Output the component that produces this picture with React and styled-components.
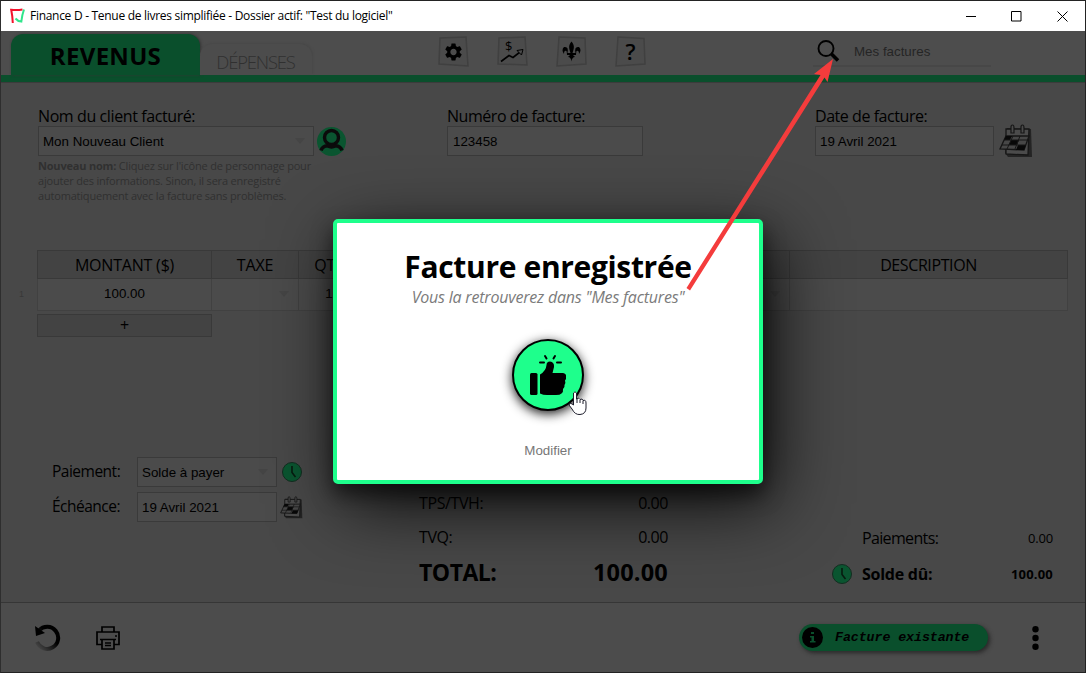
import React from "react";
import styled, { createGlobalStyle } from "styled-components";
import { MdSettings } from "react-icons/md";

const ui = `"Segoe UI", "Open Sans", "Noto Sans", sans-serif`;
const arial = `"Liberation Sans", Arial, sans-serif`;

const GlobalStyle = createGlobalStyle`
  * { box-sizing: border-box; }
  body { margin: 0; background: #484848; overflow: hidden; }
  svg { display: block; flex: none; }
`;

const Window = styled.div`
  position: relative;
  display: flex;
  flex-direction: column;
  width: 1086px;
  height: 673px;
  border: 1px solid #232323;
  border-left-color: #2e2e2e;
  background: #484848;
  color: #000;
  font-family: ${ui};
  overflow: hidden;
`;

const TitleBar = styled.div`
  display: flex;
  align-items: center;
  flex: none;
  height: 30px;
  padding: 0 17px 0 8px;
  background: #fff;
`;

const Label = styled.span`
  display: block;
  white-space: nowrap;
  font-family: ${ui};
  font-size: ${(p) => p.$size || 16}px;
  font-weight: ${(p) => p.$weight || 400};
  letter-spacing: ${(p) => p.$track || 0}px;
  line-height: ${(p) => p.$line || 20}px;
`;

const TitleText = styled(Label)`
  margin-left: 5px;
  flex: 1;
`;

const WindowButtons = styled.div`
  display: flex;
  gap: 35px;
`;

const Header = styled.header`
  display: flex;
  flex: none;
  height: 51px;
  padding-left: 10px;
  background: #4d4d4d;
  border-bottom: 7px solid #0a4f2c;
`;

const Tab = styled.div`
  display: flex;
  justify-content: center;
  align-items: center;
  align-self: flex-end;
  width: ${(p) => (p.$active ? 189 : 112)}px;
  height: ${(p) => (p.$active ? 41 : 31)}px;
  padding-top: ${(p) => (p.$active ? 2 : 5)}px;
  padding-right: ${(p) => (p.$active ? 0 : 1)}px;
  border-radius: 12px 12px 0 0;
  background: ${(p) => (p.$active ? "#0a4f2c" : "#4c4c4c")};
  box-shadow: ${(p) => (p.$active ? "1px 0 3px #333" : "1px -1px 2px #484848")};
  color: ${(p) => (p.$active ? "#000" : "#303030")};
`;

const Tools = styled.nav`
  display: flex;
  gap: 28px;
  margin: 5px 0 0 126px;
`;

const Search = styled.div`
  display: flex;
  align-items: center;
  width: 178px;
  height: 31px;
  margin: 5px 0 0 167px;
  padding: 2px 0 0 4px;
  gap: 14px;
  border-bottom: 2px solid #474747;
  color: #252525;
  font: 13.33px ${arial};
`;

const Main = styled.main`
  display: flex;
  flex-direction: column;
  flex: none;
  height: 520px;
  border-top: 1px solid #3b3b3b;
`;

const Fields = styled.section`
  display: flex;
  height: 167px;
  padding: 23px 0 0 37px;
`;

const Field = styled.div`
  width: ${(p) => p.$width}px;
`;

const Line = styled.div`
  display: flex;
  align-items: center;
  height: 30px;
  gap: ${(p) => p.$gap || 3}px;
`;

const Input = styled.div`
  display: flex;
  align-items: center;
  justify-content: space-between;
  flex: none;
  width: ${(p) => p.$width}px;
  height: 30px;
  padding: 0 ${(p) => p.$end || 8}px 0 ${(p) => p.$start || 4}px;
  border: 1px solid #3a3a3a;
  background: #4b4b4b;
  font: 13.33px ${arial};
  white-space: nowrap;
`;

const Caret = styled.i`
  width: 0;
  height: 0;
  border: 5px solid transparent;
  border-top: 6px solid #454545;
  border-bottom: 0;
`;

const Help = styled.p`
  margin: 2px 0 0;
  color: #303030;
  font-size: 11px;
  line-height: 15px;
  letter-spacing: -0.19px;
  white-space: nowrap;
`;

const Table = styled.section`
  display: grid;
  grid-template-columns: 175px 87px 61px 430px 278px;
  grid-template-rows: 29px 32px;
  width: 1031px;
  margin-left: 36px;
  position: relative;
`;

const Cell = styled.div`
  display: flex;
  align-items: center;
  justify-content: ${(p) => (p.$end ? "flex-end" : "center")};
  padding: 0 ${(p) => (p.$end ? 9 : 0)}px ${(p) => (p.$head ? 0 : 2)}px 0;
  border: solid ${(p) => (p.$head ? "#393939" : "#414141")};
  border-width: ${(p) => (p.$head ? "1px 1px 1px 0" : "0 1px 1px 0")};
  background: ${(p) => (p.$head ? "#434343" : "#4b4b4b")};
  font: 13.33px ${arial};
  &:nth-child(5n + 1) { border-left-width: 1px; }
`;

const RowNumber = styled.span`
  position: absolute;
  left: -18px;
  top: 39px;
  color: #383838;
  font: 9px ${arial};
`;

const AddRow = styled.button`
  width: 175px;
  height: 23px;
  margin: 3px 0 0 36px;
  padding: 0;
  border: 1px solid #393939;
  background: #434343;
  color: #000;
  font: 16px/19px ${ui};
`;

const Summary = styled.section`
  display: flex;
  margin-top: 119px;
  height: 145px;
`;

const Payment = styled.div`
  display: grid;
  grid-template-columns: 85px 140px 24px;
  grid-auto-rows: 30px;
  row-gap: 5px;
  width: 418px;
  padding: 1px 0 0 51px;
  align-items: center;
`;

const PaymentLabel = styled(Label)`
  padding-bottom: 3px;
`;

const PaymentIcon = styled.div`
  padding-left: ${(p) => p.$indent}px;
`;

const Totals = styled.div`
  width: 249px;
  padding-top: 30px;
`;

const Pair = styled.div`
  display: flex;
  align-items: center;
  justify-content: space-between;
  height: ${(p) => p.$height}px;
`;

const Balance = styled.div`
  width: 221px;
  margin-left: 164px;
  padding-top: 65px;
`;

const Grow = styled.div`
  flex: 1;
  padding-left: ${(p) => p.$indent || 0}px;
`;

const Footer = styled.footer`
  display: flex;
  align-items: center;
  flex: 1;
  padding: 0 46px 0 33px;
  border-top: 1px solid #363636;
  background: #4c4c4c;
`;

const FooterIcons = styled.div`
  display: flex;
  align-items: center;
  gap: 35px;
  flex: 1;
`;

const Pill = styled.div`
  display: flex;
  align-items: center;
  gap: 12px;
  width: 189px;
  height: 27px;
  margin-right: 43px;
  padding-left: 3px;
  border-radius: 14px;
  background: #0a4f2c;
  box-shadow: 2px 2px 4px #282828;
  font: italic bold 13.33px "Liberation Mono", "Courier New", monospace;
  letter-spacing: -0.1px;
  white-space: nowrap;
`;

const Modal = styled.div`
  position: absolute;
  left: 332px;
  top: 218px;
  display: flex;
  flex-direction: column;
  align-items: center;
  width: 430px;
  height: 265px;
  padding-top: 24px;
  border: 4px solid #1eff8c;
  border-radius: 5px;
  background: #fff;
  box-shadow: 0 10px 20px rgba(0, 0, 0, 0.55), 10px 20px 70px rgba(0, 0, 0, 0.85);
`;

const Subtitle = styled(Label)`
  color: #7b7b7b;
  font-style: italic;
`;

const ThumbButton = styled.div`
  display: flex;
  align-items: center;
  justify-content: center;
  width: 72px;
  height: 72px;
  margin: 32px 0 32px;
  border: 2px solid #000;
  border-radius: 50%;
  background: #1eff8c;
  box-shadow: 0 3px 11px rgba(0, 0, 0, 0.9);
`;

const Secondary = styled.span`
  color: #777;
  font: 13.33px/15px ${arial};
`;

const Annotation = styled.svg`
  position: absolute;
  left: -1px;
  top: -1px;
  pointer-events: none;
`;

const Logo = () => (
  <svg width="16" height="16" viewBox="0 0 16 16" fill="none" strokeWidth="2">
    <path d="M13.500 1.500 Q8 2.500 2.200 1.800 Q3.500 8 3.800 15" stroke="#f3122c" />
    <path d="M15 1.500 Q13 7 12.300 13.600 Q9 13.500 6.500 10.500" stroke="#2fe58b" />
  </svg>
);

const Frame = ({ points, children }) => (
  <svg width="31" height="31" viewBox="0 0 31 31">
    <polygon points={points} fill="#4b4b4b" stroke="#404040" strokeWidth="1.5" />
    {children}
  </svg>
);

const Calendar = ({ size }) => (
  <svg width={size} height={size} viewBox="0 0 34 34">
    <path d="M8 4 L32 5 L33 33 L9 33 L6 29Z" fill="#242424" />
    <path d="M7 5 L30 5 L29 31 L7 30Z" fill="#4b4b4b" stroke="#161616" strokeWidth="1.3" />
    <path d="M7 12 L30 12 L25 26 L1 25Z" fill="#474747" stroke="#161616" strokeWidth="1.3" />
    <path d="M7 12h6l-2 4H5zM12 16h8l-2 5h-8zM19 21h8l-2 5h-8z" fill="#080808" />
    <path d="M5 16h23M3 21h24M14 12L8 25M21 12l-5 13" stroke="#161616" strokeWidth="1" />
    <path d="M12 9V3q0-2 1.500-2t1.500 3v5zM22 9V3q0-2 1.500-2t1.500 3v5z" fill="#4b4b4b" stroke="#161616" strokeWidth="1.200" />
  </svg>
);

const Clock = () => (
  <svg width="20" height="20" viewBox="0 0 20 20">
    <circle cx="10" cy="10" r="9.500" fill="#0a5530" stroke="#132d20" />
    <path d="M10 4 V10.500 L13.500 15" fill="none" stroke="#071b10" strokeWidth="1.600" />
  </svg>
);

const Person = () => (
  <svg width="29" height="29" viewBox="0 0 29 29">
    <circle cx="14.500" cy="14.500" r="14.500" fill="#0a5530" />
    <circle cx="14.500" cy="10.500" r="7" fill="none" stroke="#0b0b0b" strokeWidth="3.400" />
    <path d="M4 23.500 Q5.500 19 10.500 18.700 Q14.500 21 18.500 18.700 Q23.500 19 25 23.500" fill="none" stroke="#0b0b0b" strokeWidth="3.600" />
  </svg>
);

const Thumb = () => (
  <svg width="40" height="44" viewBox="0 0 40 44">
    <rect x="2" y="20" width="7.500" height="22" rx="1.500" />
    <path d="M12 21.500 Q18 18 18.500 12 Q18.500 8.500 22 8.500 Q26.500 9 26 14 L24.500 20 H35 Q38.500 20.500 38 23.500 Q38.500 26 37 27.500 Q38 30 36.500 32 Q37 34.500 35 36 Q35.500 39 33.500 40.500 Q32 42 28 42 H19 Q15 42 12 40.500Z" />
    <path d="M12 9.500h4M29 9.500h4M17 3l1.500 2.500M27 3l-1.500 2.500" stroke="#000" strokeWidth="2" strokeLinecap="round" />
  </svg>
);

export default function App() {
  return (
    <>
      <GlobalStyle />
      <Window>
        <TitleBar>
          <Logo />
          <TitleText $size={12} $track={-0.29}>Finance D - Tenue de livres simplifiée - Dossier actif: "Test du logiciel"</TitleText>
          <WindowButtons>
            <svg width="11" height="11"><path d="M1 5.500h10" stroke="#000" /></svg>
            <svg width="11" height="11"><path d="M.5.5h9.500v9.500H.5z" fill="none" stroke="#000" /></svg>
            <svg width="11" height="11"><path d="M.5.500l10 10M10.500.500l-10 10" stroke="#000" /></svg>
          </WindowButtons>
        </TitleBar>

        <Header>
          <Tab $active><Label $size={24} $weight={700} $line={30} $track={0.3}>REVENUS</Label></Tab>
          <Tab><Label $size={18.5} $weight={300} $track={-1.2}>DÉPENSES</Label></Tab>
          <Tools>
            <Frame points="2,2 28,1 30,30 1,28"><MdSettings x="5" y="5.500" size="21" /></Frame>
            <Frame points="2,2 28,1 30,29 1,28">
              <text x="8" y="15" fontSize="13" fontFamily="Open Sans, sans-serif">$</text>
              <path d="M4 25.500 L12 19.500 L16 21.500 L23 16" fill="none" stroke="#000" strokeWidth="1.600" />
              <path d="M20 14.500 L26 13.500 L24.500 19Z" fill="#4b4b4b" stroke="#000" />
            </Frame>
            <Frame points="3,1 29,2 30,28 1,30">
              <path d="M15.500 5.500 C12 10 13 12 14.500 17 H11.500 Q13 10 8 11 Q5 14 8 18 Q8 14 10.500 15 Q11 17 11 19 H14 L12 21 Q15 21 15.500 25.500 Q16 21 19 21 L17 19 H20 Q20 17 20.500 15 Q23 14 23 18 Q26 14 23 11 Q18 10 19.500 17 H16.500 C18 12 19 10 15.500 5.500Z" />
            </Frame>
            <Frame points="3,1 29,2.500 30,28 1,30">
              <text x="10.500" y="24" fontSize="22" fontWeight="600" fontFamily="Open Sans, sans-serif">?</text>
            </Frame>
          </Tools>
          <Search>
            <svg width="23" height="23" viewBox="0 0 23 23" fill="none" stroke="#000">
              <circle cx="9" cy="8.500" r="7.500" strokeWidth="1.900" />
              <path d="M14 13.500l7 7" strokeWidth="3.600" />
            </svg>
            Mes factures
          </Search>
        </Header>

        <Main>
          <Fields>
            <Field $width={409}>
              <Label $track={-0.4}>Nom du client facturé:</Label>
              <Line><Input $width={276}>Mon Nouveau Client<Caret /></Input><Person /></Line>
              <Help><b>Nouveau nom:</b> Cliquez sur l'icône de personnage pour<br />ajouter des informations. Sinon, il sera enregistré<br />automatiquement avec la facture sans problèmes.</Help>
            </Field>
            <Field $width={368}>
              <Label $track={-0.45}>Numéro de facture:</Label>
              <Input $width={196} $start={5}>123458</Input>
            </Field>
            <Field $width={220}>
              <Label $track={-0.45}>Date de facture:</Label>
              <Line $gap={5}><Input $width={179}>19 Avril 2021</Input><Calendar size={34} /></Line>
            </Field>
          </Fields>

          <Table>
            <Cell $head><Label $track={-0.2}>MONTANT ($)</Label></Cell>
            <Cell $head><Label $track={-0.2}>TAXE</Label></Cell>
            <Cell $head><Label $track={-0.2}>QTÉ</Label></Cell>
            <Cell $head />
            <Cell $head><Label $track={-0.4}>DESCRIPTION</Label></Cell>
            <Cell>100.00</Cell>
            <Cell $end><Caret /></Cell>
            <Cell>1</Cell>
            <Cell $end><Caret /></Cell>
            <Cell />
            <RowNumber>1</RowNumber>
          </Table>
          <AddRow>+</AddRow>

          <Summary>
            <Payment>
              <PaymentLabel $size={15.5} $track={-0.5}>Paiement:</PaymentLabel>
              <Input $width={140}>Solde à payer<Caret /></Input>
              <PaymentIcon $indent={5}><Clock /></PaymentIcon>
              <PaymentLabel $size={15.5} $track={-0.5}>Échéance:</PaymentLabel>
              <Input $width={140}>19 Avril 2021</Input>
              <PaymentIcon $indent={3}><Calendar size={23} /></PaymentIcon>
            </Payment>
            <Totals>
              <Pair $height={34}><Label $track={-0.4}>TPS/TVH:</Label><Label $track={-0.45}>0.00</Label></Pair>
              <Pair $height={34}><Label $track={-0.4}>TVQ:</Label><Label $track={-0.45}>0.00</Label></Pair>
              <Pair $height={36}><Label $size={23} $weight={700} $track={-0.5}>TOTAL:</Label><Label $size={23.5} $weight={700} $track={0.2}>100.00</Label></Pair>
            </Totals>
            <Balance>
              <Pair $height={34}><Grow $indent={30}><Label $track={-0.65}>Paiements:</Label></Grow><Label $size={13} $track={-0.2}>0.00</Label></Pair>
              <Pair $height={38}><Clock /><Grow $indent={10}><Label $weight={700} $track={-0.25}>Solde dû:</Label></Grow><Label $size={13} $weight={700} $track={0.2}>100.00</Label></Pair>
            </Balance>
          </Summary>
        </Main>

        <Footer>
          <FooterIcons>
            <svg width="27" height="27" viewBox="0 0 27 27" fill="none">
              <defs><linearGradient id="fade" x1="0" y1="1" x2=".6" y2=".4"><stop offset="0" stopColor="#4c4c4c" /><stop offset="1" stopColor="#000" /></linearGradient></defs>
              <path d="M5 6.500 A11 11 0 1 1 3 18" stroke="url(#fade)" strokeWidth="4" />
              <path d="M1 2 L2 12 L11 9Z" fill="#000" />
            </svg>
            <svg width="24" height="24" viewBox="0 0 24 24" fill="none" stroke="#000" strokeWidth="1.700">
              <path d="M6 6V1h12v5M6 18.500H1V6h22v12.500h-5M4 13.500h16M6 14v9h12v-9M9 17h6M9 19.500h6M19 10h2" />
            </svg>
          </FooterIcons>
          <Pill>
            <svg width="21" height="21" viewBox="0 0 21 21"><circle cx="10.500" cy="10.500" r="10.500" /><path d="M9 5h3v2H9zM8 9h4v5h1.500v1.500H8V14h1.500v-3.500H8z" fill="#0a4f2c" /></svg>
            Facture existante
          </Pill>
          <svg width="8" height="24" viewBox="0 0 8 24"><circle cx="4.500" cy="3.200" r="3.200" /><circle cx="4.500" cy="12" r="3.200" /><circle cx="4.500" cy="20.800" r="3.200" /></svg>
        </Footer>

        <Modal>
          <Label $size={30} $weight={700} $line={40} $track={-0.34}>Facture enregistrée</Label>
          <Subtitle $size={16} $line={20} $track={-0.2}>Vous la retrouverez dans "Mes factures"</Subtitle>
          <ThumbButton><Thumb /></ThumbButton>
          <Secondary>Modifier</Secondary>
        </Modal>

        <Annotation width="1086" height="673" viewBox="0 0 1086 673">
          <path d="M686.500 288 L690 290.500 L824.500 77.500 L827.500 82 L833 59 L814 74 L820.500 75Z" fill="#f43c3c" />
          <path d="M573.500 403 V393 Q575 390.500 576.500 393 V399 Q579 397 580 399.500 Q582.500 398 583 400.500 Q586 399.500 586 403 V408 Q586 414 580 414.500 Q575 415 572 409 L569 405 Q570 402 573.500 405Z" fill="#fff" stroke="#1c1c2a" />
          <path d="M577 399v4M580 400v3M583 401v3" stroke="#1c1c2a" />
        </Annotation>
      </Window>
    </>
  );
}
